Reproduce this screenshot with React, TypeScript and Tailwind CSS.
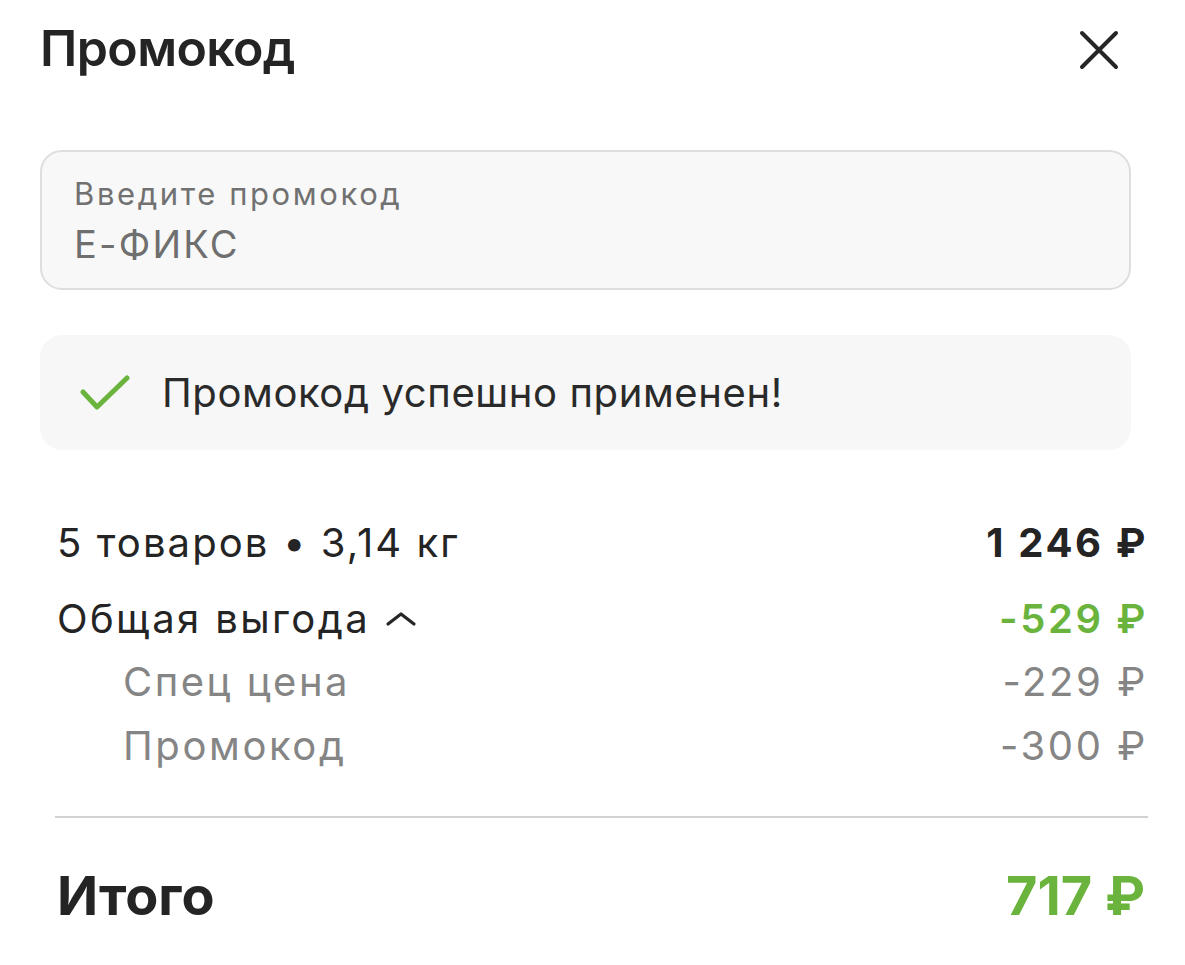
import React from "react";

const font = { fontFamily: "Inter, 'Noto Sans', sans-serif" };

export default function App() {
  return (
    <div className="w-[1185px] h-[965px] bg-white text-[#242424] overflow-hidden" style={font}>
      {/* Header */}
      <div className="flex items-start justify-between pl-[40px] pr-[66px] pt-[22px]">
        <h1 className="text-[50px] leading-[52px] font-semibold tracking-[-0.6px]">Промокод</h1>
        <svg width="40" height="40" viewBox="0 0 40 40" className="mt-[8px]">
          <path d="M3 3 L37 37 M37 3 L3 37" stroke="#262626" strokeWidth="4" strokeLinecap="round" />
        </svg>
      </div>

      {/* Input */}
      <div className="pl-[40px] pr-[54px] mt-[76px]">
        <div className="h-[140px] rounded-[22px] border-2 border-[#dedede] bg-[#f8f8f8] pl-[32px] pt-[22px]">
          <div className="text-[31px] leading-[40px] tracking-[2.6px] text-[#717171]">Введите промокод</div>
          <div className="text-[38px] leading-[48px] tracking-[2.2px] text-[#6f6f6f] mt-[6px]">Е-ФИКС</div>
        </div>
      </div>

      {/* Success */}
      <div className="pl-[40px] pr-[54px] mt-[45px]">
        <div className="h-[115px] rounded-[22px] bg-[#f7f7f7] flex items-center pl-[40px]">
          <svg width="50" height="36" viewBox="0 0 50 36" className="shrink-0">
            <path d="M3 17 L17 32 L47 3" fill="none" stroke="#6ab43e" strokeWidth="5" strokeLinecap="round" strokeLinejoin="round" />
          </svg>
          <span className="ml-[32px] text-[40px] leading-[48px] tracking-[0.6px] text-[#2a2a2a]">Промокод успешно применен!</span>
        </div>
      </div>

      {/* Rows */}
      <div className="pl-[57px] pr-[37px] mt-[69px] flex flex-col text-[40px] leading-[48px]">
        <div className="flex justify-between h-[76px] items-start">
          <span className="tracking-[2.1px]">5 товаров • 3,14 кг</span>
          <span className="font-bold tracking-[2.6px]">1 246 ₽</span>
        </div>
        <div className="flex justify-between h-[63px] items-start">
          <span className="flex items-center tracking-[2.4px]">
            Общая выгода
            <svg width="32" height="16" viewBox="0 0 32 16" className="ml-[15px]">
              <path d="M3 13 L16 3 L29 13" fill="none" stroke="#262626" strokeWidth="3.2" strokeLinecap="round" strokeLinejoin="round" />
            </svg>
          </span>
          <span className="font-semibold tracking-[2.6px] text-[#6ab43e]">-529 ₽</span>
        </div>
        <div className="flex justify-between h-[64px] items-start text-[#858585]">
          <span className="pl-[66px] tracking-[2.5px]">Спец цена</span>
          <span className="tracking-[2.6px]">-229 ₽</span>
        </div>
        <div className="flex justify-between h-[48px] items-start text-[#858585]">
          <span className="pl-[66px] tracking-[2.6px]">Промокод</span>
          <span className="tracking-[2.6px]">-300 ₽</span>
        </div>
      </div>

      <div className="ml-[55px] mr-[37px] mt-[46px] h-[2px] bg-[#d2d2d2]"></div>

      <div className="flex items-center justify-between pl-[57px] pr-[40px] mt-[48px]">
        <span className="text-[54px] leading-[60px] font-bold">Итого</span>
        <span className="text-[54px] leading-[60px] font-bold text-[#6ab43e]">717 ₽</span>
      </div>
    </div>
  );
}
